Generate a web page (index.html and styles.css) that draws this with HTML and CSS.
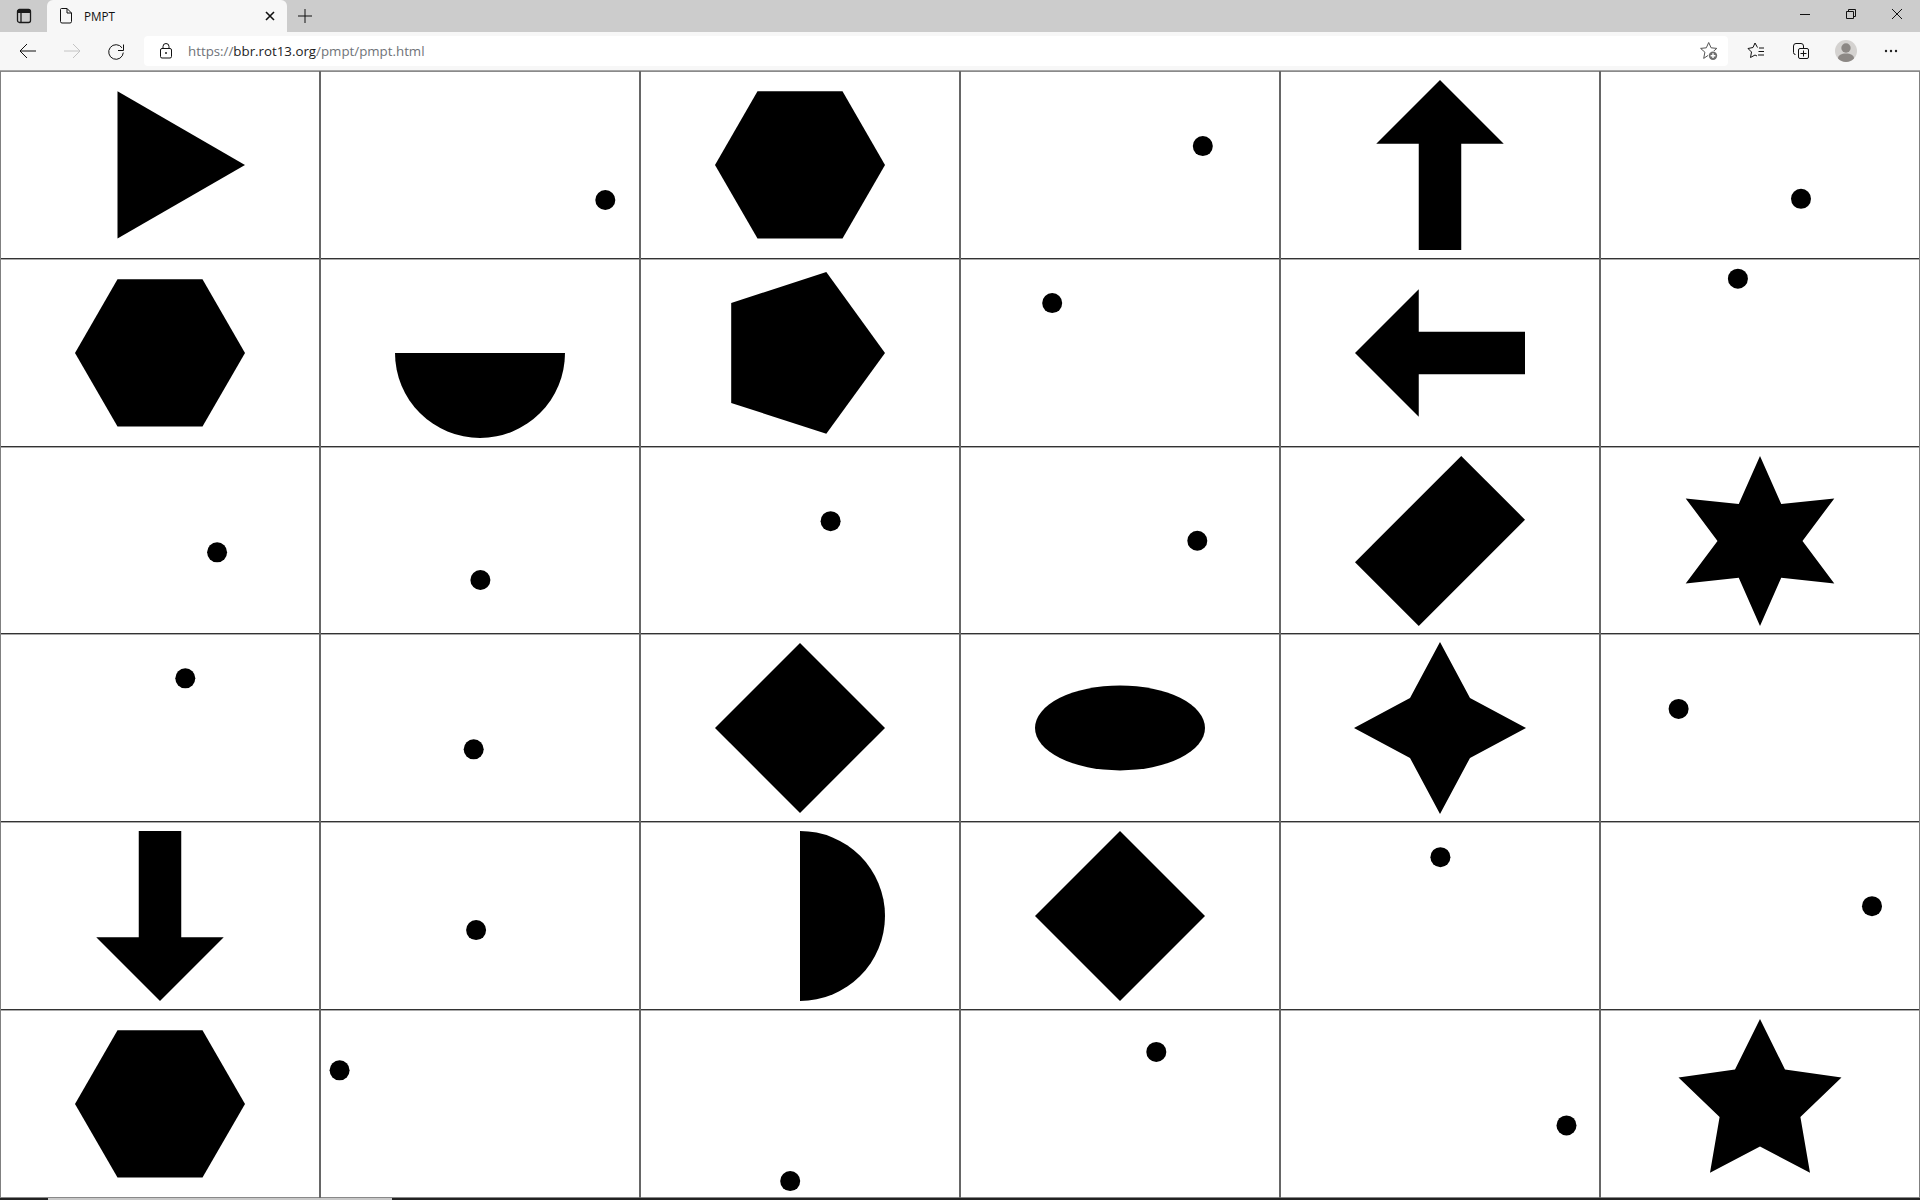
FILE: index.html
```html
<!DOCTYPE html>
<html lang="en">
<head>
<meta charset="utf-8">
<title>PMPT</title>
<link rel="stylesheet" href="styles.css">
</head>
<body>
<header class="tabstrip">
  <div class="strip-btn">
    <svg class="ico" width="16" height="16" viewBox="0 0 16 16"><rect x="1.500" y="1.500" width="13" height="13" rx="2" class="mid"/><path d="M1.500 3.500h13" class="heavy"/><path d="M5 4v10.500" class="mid"/></svg>
  </div>
  <div class="tab">
    <svg class="ico doc" width="16" height="16" viewBox="0 0 16 16"><path d="M2.500 1.500a1 1 0 0 1 1-1h5.500l4.500 4.500v8.500a1.500 1.500 0 0 1-1.500 1.500h-8a1.500 1.500 0 0 1-1.500-1.500zM9 .5v4.500h4.500" class="ln"/></svg>
    <span class="tab-title">PMPT</span>
    <svg class="ico tab-close" width="10" height="10" viewBox="0 0 10 10"><path d="M1 1l8 8M9 1l-8 8" class="thick"/></svg>
  </div>
  <div class="new-tab">
    <svg class="ico" width="16" height="16" viewBox="0 0 16 16"><path d="M8 1v14M1 8h14" class="ln"/></svg>
  </div>
  <div class="win-controls">
    <div class="win-btn"><svg class="ico" width="10" height="10" viewBox="0 0 10 10"><path d="M0 5.500h10" class="ln"/></svg></div>
    <div class="win-btn"><svg class="ico" width="10" height="10" viewBox="0 0 10 10"><path d="M.5 2.500h7v7h-7zM2.500 2.500v-2h7v7h-2" class="ln"/></svg></div>
    <div class="win-btn"><svg class="ico" width="10" height="10" viewBox="0 0 10 10"><path d="M0 0l10 10M10 0l-10 10" class="ln"/></svg></div>
  </div>
</header>
<nav class="toolbar">
  <div class="nav-btn"><svg class="ico" width="18" height="18" viewBox="0 0 18 18"><path d="M1 9h16M8 2L1 9l7 7" class="ln"/></svg></div>
  <div class="nav-btn"><svg class="ico muted" width="18" height="18" viewBox="0 0 18 18"><path d="M17 9H1M10 2l7 7-7 7" class="ln"/></svg></div>
  <div class="nav-btn"><svg class="ico" width="18" height="18" viewBox="0 0 18 18"><path d="M15 5.800A7.300 7.300 0 1 0 16.300 10.600M16.500 2.500V8.500H11" class="ln"/></svg></div>
  <div class="address">
    <svg class="ico lock" width="14" height="16" viewBox="0 0 14 16"><rect x="1.500" y="5.500" width="11" height="9.500" rx="1.500" class="ln"/><path d="M4 5.500V3.500a3 3 0 0 1 6 0v2" class="ln"/><circle cx="7" cy="10" r="1" class="fill"/></svg>
    <span class="url"><span class="dim">https://</span>bbr.rot13.org<span class="dim">/pmpt/pmpt.html</span></span>
    <svg class="ico fav-add" width="20" height="20" viewBox="0 0 20 20"><path d="M9.700 1.500l2.400 5.300 5.700.6-4.300 3.800 1.200 6.200-5-3.400-5 3.400 1.200-6.200-4.300-3.800 5.700-.6z" class="soft"/><circle cx="14" cy="14.700" r="5" class="white-disc"/><circle cx="14" cy="14.700" r="4.200" class="gray-fill"/><path d="M14 12.300v4.800M11.600 14.700h4.800" class="white-ln"/></svg>
  </div>
  <div class="actions">
    <div class="act"><svg class="ico" width="18" height="18" viewBox="0 0 18 18"><path d="M10.500 5.500L8 1 6 5.500 1 6.500 4.500 10 3.500 15.500 8 13 10 14" class="ln"/><path d="M12 6h5M11.500 9.500h5.500M11 13h6" class="ln"/></svg></div>
    <div class="act"><svg class="ico" width="18" height="18" viewBox="0 0 18 18"><path d="M3.500 12.500A2 2 0 0 1 1.500 10.500V4A2.500 2.500 0 0 1 4 1.500h5A2.500 2.500 0 0 1 11.500 4v2" class="ln"/><rect x="6.500" y="6.500" width="10" height="10" rx="1.500" class="ln"/><path d="M11.500 8.500v6M8.500 11.500h6" class="ln"/></svg></div>
    <div class="act"><svg class="ico" width="22" height="22" viewBox="0 0 22 22"><circle cx="11" cy="11" r="11" class="avatar-bg"/><circle cx="11" cy="8" r="4.700" class="avatar-fg"/><path d="M3 18.500c0-3.500 3.500-5 8-5s8 1.500 8 5a11 11 0 0 1-16 0z" class="avatar-fg"/></svg></div>
    <div class="act act-last"><svg class="ico" width="14" height="4" viewBox="0 0 14 4"><circle cx="2" cy="2" r="1.200" class="fill"/><circle cx="7" cy="2" r="1.200" class="fill"/><circle cx="12" cy="2" r="1.200" class="fill"/></svg></div>
  </div>
</nav>
<main class="board">
  <div class="cell"><svg class="shape" viewBox="-160 -93.915 320 187.830"><polygon points="-42.500,-73.600 85,0 -42.500,73.600"/></svg></div>
  <div class="cell"><svg class="shape" viewBox="-160 -93.915 320 187.830"><circle cx="125.300" cy="35.100" r="10"/></svg></div>
  <div class="cell"><svg class="shape" viewBox="-160 -93.915 320 187.830"><polygon points="-85,0 -42.500,-73.600 42.500,-73.600 85,0 42.500,73.600 -42.500,73.600"/></svg></div>
  <div class="cell"><svg class="shape" viewBox="-160 -93.915 320 187.830"><circle cx="82.800" cy="-18.800" r="10"/></svg></div>
  <div class="cell"><svg class="shape" viewBox="-160 -93.915 320 187.830"><polygon points="0,-85 63.750,-21.250 21.250,-21.250 21.250,85 -21.250,85 -21.250,-21.250 -63.750,-21.250"/></svg></div>
  <div class="cell"><svg class="shape" viewBox="-160 -93.915 320 187.830"><circle cx="41" cy="33.900" r="10"/></svg></div>

  <div class="cell"><svg class="shape" viewBox="-160 -93.915 320 187.830"><polygon points="-85,0 -42.500,-73.600 42.500,-73.600 85,0 42.500,73.600 -42.500,73.600"/></svg></div>
  <div class="cell"><svg class="shape" viewBox="-160 -93.915 320 187.830"><path d="M-85 0A85 85 0 0 0 85 0Z"/></svg></div>
  <div class="cell"><svg class="shape" viewBox="-160 -93.915 320 187.830"><polygon points="85,0 26.300,80.800 -68.800,50 -68.800,-50 26.300,-80.800"/></svg></div>
  <div class="cell"><svg class="shape" viewBox="-160 -93.915 320 187.830"><circle cx="-67.800" cy="-49.850" r="10"/></svg></div>
  <div class="cell"><svg class="shape" viewBox="-160 -93.915 320 187.830"><polygon points="-85,0 -21.250,-63.750 -21.250,-21.250 85,-21.250 85,21.250 -21.250,21.250 -21.250,63.750"/></svg></div>
  <div class="cell"><svg class="shape" viewBox="-160 -93.915 320 187.830"><circle cx="-22.100" cy="-74.250" r="10"/></svg></div>

  <div class="cell"><svg class="shape" viewBox="-160 -93.915 320 187.830"><circle cx="57.100" cy="11.450" r="10"/></svg></div>
  <div class="cell"><svg class="shape" viewBox="-160 -93.915 320 187.830"><circle cx="0.400" cy="39.050" r="10"/></svg></div>
  <div class="cell"><svg class="shape" viewBox="-160 -93.915 320 187.830"><circle cx="30.600" cy="-19.750" r="10"/></svg></div>
  <div class="cell"><svg class="shape" viewBox="-160 -93.915 320 187.830"><circle cx="77.300" cy="-.15" r="10"/></svg></div>
  <div class="cell"><svg class="shape" viewBox="-160 -93.915 320 187.830"><polygon points="21.250,-85 85,-21.250 -21.250,85 -85,21.250"/></svg></div>
  <div class="cell"><svg class="shape" viewBox="-160 -93.915 320 187.830"><polygon points="0,-85 21.250,-36.800 74.300,-42.500 42.500,0 74.300,42.500 21.250,36.800 0,85 -21.250,36.800 -74.300,42.500 -42.500,0 -74.300,-42.500 -21.250,-36.800"/></svg></div>

  <div class="cell"><svg class="shape" viewBox="-160 -93.915 320 187.830"><circle cx="25.300" cy="-49.600" r="10"/></svg></div>
  <div class="cell"><svg class="shape" viewBox="-160 -93.915 320 187.830"><circle cx="-6.300" cy="21.400" r="10"/></svg></div>
  <div class="cell"><svg class="shape" viewBox="-160 -93.915 320 187.830"><polygon points="0,-85 85,0 0,85 -85,0"/></svg></div>
  <div class="cell"><svg class="shape" viewBox="-160 -93.915 320 187.830"><ellipse cx="0" cy="0" rx="85" ry="42.500"/></svg></div>
  <div class="cell"><svg class="shape" viewBox="-160 -93.915 320 187.830"><polygon points="0,-86 30,-30 86,0 30,30 0,86 -30,30 -86,0 -30,-30"/></svg></div>
  <div class="cell"><svg class="shape" viewBox="-160 -93.915 320 187.830"><circle cx="-81.400" cy="-19" r="10"/></svg></div>

  <div class="cell"><svg class="shape" viewBox="-160 -93.915 320 187.830"><polygon points="0,85 63.750,21.250 21.250,21.250 21.250,-85 -21.250,-85 -21.250,21.250 -63.750,21.250"/></svg></div>
  <div class="cell"><svg class="shape" viewBox="-160 -93.915 320 187.830"><circle cx="-3.900" cy="14.150" r="10"/></svg></div>
  <div class="cell"><svg class="shape" viewBox="-160 -93.915 320 187.830"><path d="M0 -85A85 85 0 0 1 0 85Z"/></svg></div>
  <div class="cell"><svg class="shape" viewBox="-160 -93.915 320 187.830"><polygon points="0,-85 85,0 0,85 -85,0"/></svg></div>
  <div class="cell"><svg class="shape" viewBox="-160 -93.915 320 187.830"><circle cx="0.400" cy="-58.750" r="10"/></svg></div>
  <div class="cell"><svg class="shape" viewBox="-160 -93.915 320 187.830"><circle cx="112" cy="-9.750" r="10"/></svg></div>

  <div class="cell"><svg class="shape" viewBox="-160 -93.915 320 187.830"><polygon points="-85,0 -42.500,-73.600 42.500,-73.600 85,0 42.500,73.600 -42.500,73.600"/></svg></div>
  <div class="cell"><svg class="shape" viewBox="-160 -93.915 320 187.830"><circle cx="-140.400" cy="-33.600" r="10"/></svg></div>
  <div class="cell"><svg class="shape" viewBox="-160 -93.915 320 187.830"><circle cx="-9.800" cy="77.200" r="10"/></svg></div>
  <div class="cell"><svg class="shape" viewBox="-160 -93.915 320 187.830"><circle cx="36.300" cy="-52" r="10"/></svg></div>
  <div class="cell"><svg class="shape" viewBox="-160 -93.915 320 187.830"><circle cx="126.500" cy="21.500" r="10"/></svg></div>
  <div class="cell"><svg class="shape" viewBox="-160 -93.915 320 187.830"><polygon points="0,-85 25,-34.400 81.500,-26.300 40.400,13.100 50,68.800 0,42.500 -50,68.800 -40.400,13.100 -81.500,-26.300 -25,-34.400"/></svg></div>
</main>
<footer class="taskbar">
  <div class="task-gap"></div>
  <div class="task-active"></div>
  <div class="task-rest"></div>
</footer>
</body>
</html>
```

FILE: styles.css
```css
* { box-sizing: border-box; }
html, body { margin: 0; height: 100%; }
body {
  width: 1920px;
  height: 1200px;
  overflow: hidden;
  display: flex;
  flex-direction: column;
  background: #fff;
  font-family: "Open Sans", "Noto Sans", sans-serif;
  color: #111;
}
.ico { display: block; flex: none; }
.ln { fill: none; stroke: #111; stroke-width: 1; }
.mid { fill: none; stroke: #1a1a1a; stroke-width: 1.3; }
.heavy { fill: none; stroke: #1a1a1a; stroke-width: 3; }
.soft { fill: none; stroke: #555; stroke-width: 1; }
.thick { fill: none; stroke: #111; stroke-width: 1.6; }
.fill { fill: #222; }
.muted .ln { stroke: #c4c4c4; }
.gray-fill { fill: #6e6e6e; }
.white-disc { fill: #fff; }
.white-ln { stroke: #fff; stroke-width: 1.4; }
.avatar-bg { fill: #d4d2d0; }
.avatar-fg { fill: #8c8885; }

.tabstrip { display: flex; height: 32px; flex: none; background: #cccccc; }
.strip-btn { width: 47px; display: flex; align-items: center; justify-content: center; }
.tab {
  width: 240px;
  display: flex;
  align-items: center;
  background: #f7f7f7;
  border-radius: 6px 6px 0 0;
  padding-left: 11px;
  padding-right: 12px;
}
.tab-title { margin-left: 10px; font-size: 11.7px; flex: 1; }
.new-tab { width: 36px; display: flex; align-items: center; justify-content: center; }
.win-controls { display: flex; margin-left: auto; height: 28px; }
.win-btn { width: 46px; display: flex; align-items: center; justify-content: center; }

.toolbar {
  display: flex;
  align-items: center;
  flex: none;
  height: 39px;
  padding: 0 6px 1px;
  background: #f7f7f7;
  border-bottom: 1px solid #a6a6a6;
}
.nav-btn { width: 44px; display: flex; align-items: center; justify-content: center; }
.address {
  flex: 1;
  height: 30px;
  margin-left: 6px;
  display: flex;
  align-items: center;
  padding: 0 9px 0 15px;
  background: #fff;
  border-radius: 4px;
}
.url { margin-left: 15px; font-size: 13.3px; color: #1c1c1c; flex: 1; white-space: nowrap; }
.dim { color: #6f7378; }
.actions { display: flex; margin-left: 5px; }
.act { width: 45px; display: flex; align-items: center; justify-content: center; }
.act-last { width: 46px; }

.board {
  flex: 1;
  min-height: 0;
  display: grid;
  grid-template-columns: repeat(6, 1fr);
  grid-template-rows: repeat(6, 1fr);
}
.cell {
  --l: #666;
  --r: #666;
  --t: #aaa;
  --b: #333;
  min-height: 0;
  box-shadow: inset 1px 0 var(--l), inset -1px 0 var(--r), inset 0 1px var(--t), inset 0 -1px var(--b);
}
.cell:nth-child(6n+1) { --l: #808080; }
.cell:nth-child(6n) { --r: #808080; }
.cell:nth-child(-n+6) { --t: #8a8a8a; }
.cell:nth-child(n+31) { --b: #888; }
.shape { display: block; width: 100%; height: 100%; fill: #000; }

.taskbar { display: flex; flex: none; height: 2px; background: #222; }
.task-gap { width: 48px; }
.task-active { width: 344px; background: #c8c8c8; }
.task-rest { flex: 1; }
```
